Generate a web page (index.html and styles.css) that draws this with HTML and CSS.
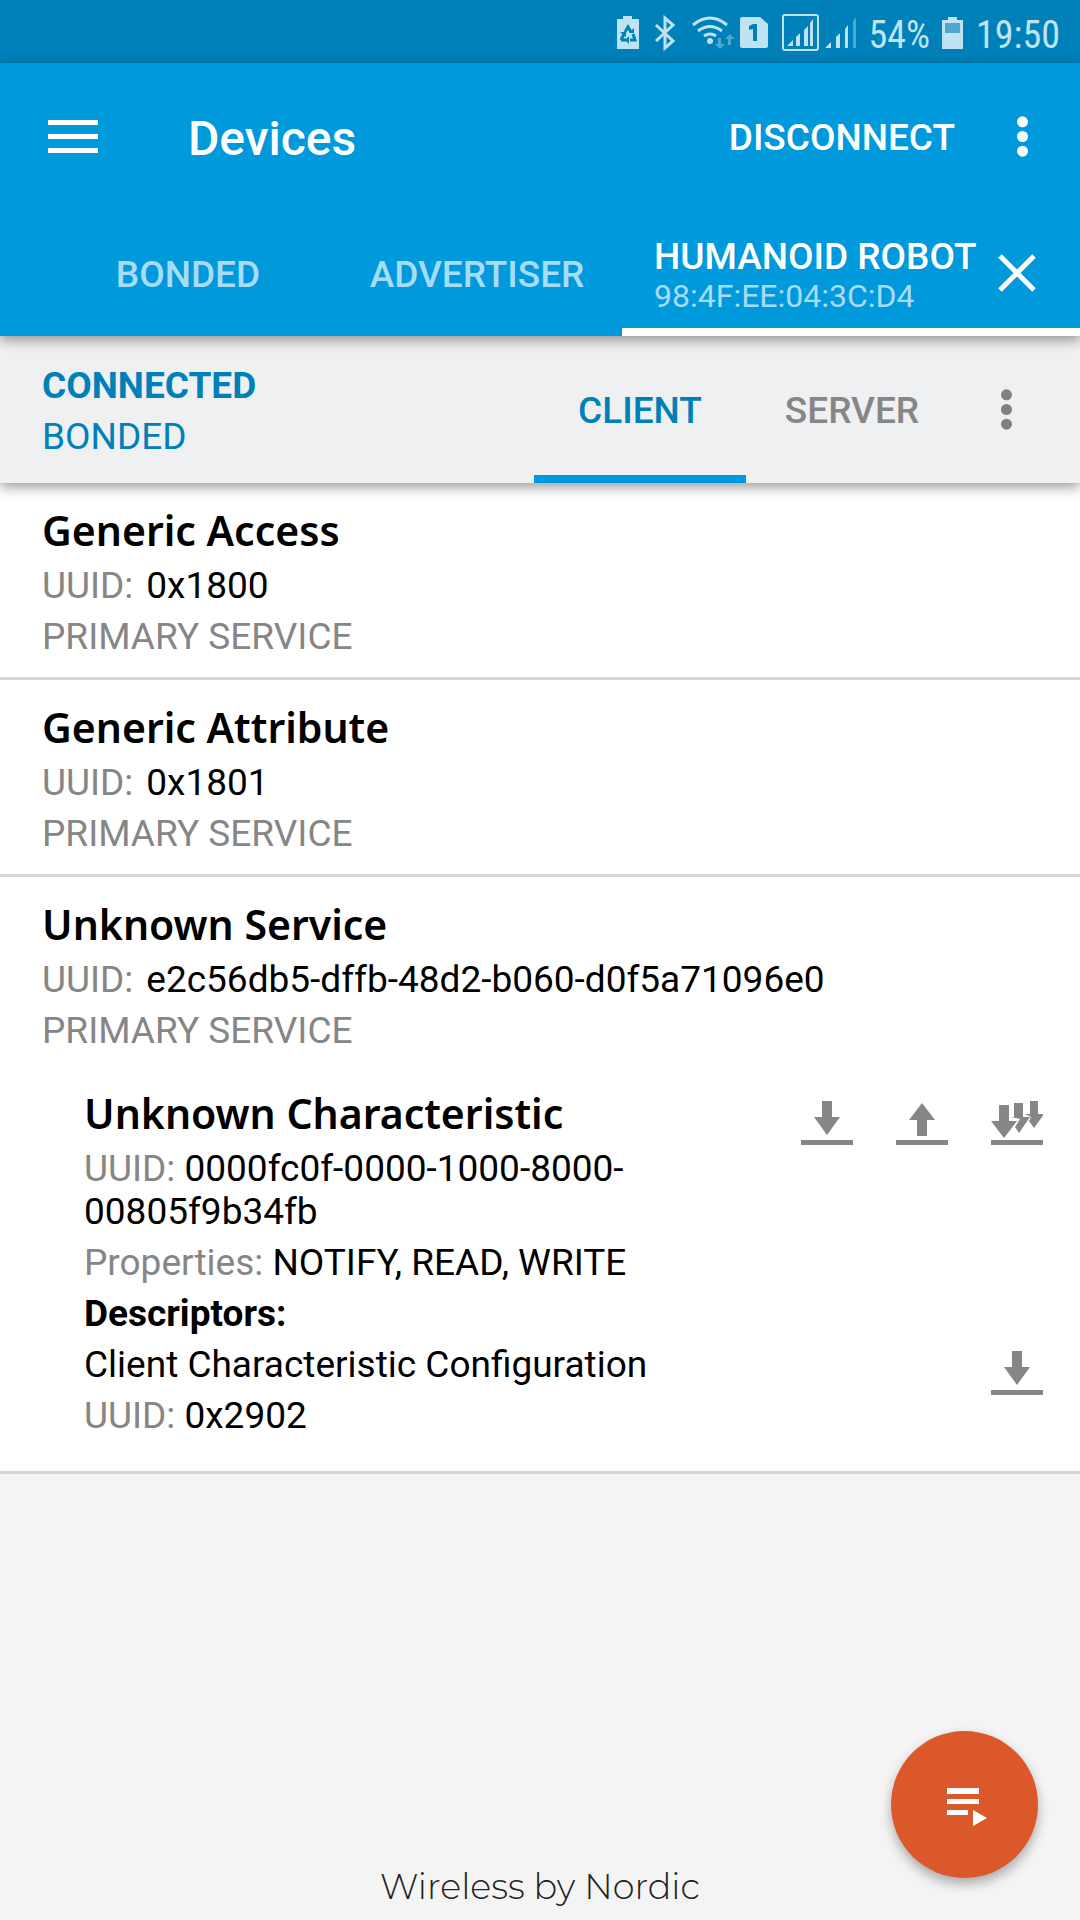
FILE: index.html
```html
<!DOCTYPE html>
<html lang="en">
<head>
<meta charset="utf-8">
<meta name="viewport" content="width=device-width, initial-scale=1">
<title>Devices</title>
<link rel="stylesheet" href="styles.css">
</head>
<body>
<svg class="defs" aria-hidden="true">
  <symbol id="read" viewBox="0 0 52 46"><path d="M21 1h10v16h8L26 35 13 17h8zM0 40h52v5H0z"/></symbol>
  <symbol id="write" viewBox="0 0 52 46"><path d="M21 36h10V20h8L26 3 13 20h8zM0 40h52v5H0z"/></symbol>
  <symbol id="notify" viewBox="0 0 52 46"><path d="M39 1h8v13h6L43 28l-5-7 2-4-6-3h5zM23 3h9v14h7L28 33l-4-6 5-8-9-2h3zM8 5h10v16h8L13 38 0 21h8zM0 40h52v5H0z"/></symbol>
  <symbol id="more" viewBox="0 0 12 44"><circle cx="6" cy="6" r="6"/><circle cx="6" cy="22" r="6"/><circle cx="6" cy="38" r="6"/></symbol>
</svg>

<div class="status">
  <svg class="st-recycle" width="22" height="34" viewBox="0 0 22 34"><path class="pale" d="M6 0h9v3h7v30H0V3h6z"/><path class="recycle" d="M8 16l3-5 3 5M16 18l2 6h-5M4 24l3-6M4 24h5"/><path class="dark" d="M12 20v8l-4-4zM3 16l6 0 0 5zM12 17l5 0 0-5z"/></svg>
  <svg class="st-bt" width="22" height="34" viewBox="0 0 22 34"><path class="stroke" d="M2 9l17 16-8 7V2l8 7L2 25"/></svg>
  <svg class="st-wifi" width="42" height="34" viewBox="0 0 42 34"><path class="stroke" d="M1 9q17-14 34 0M6 15q12-9 24 0M12 20q6-4 12 0"/><circle class="pale" cx="18" cy="25" r="3"/><path class="faint" d="M26 22h3v6h4l-5 5-5-5h3zM36 29h3v-6h4l-5-5-5 5h3z"/></svg>
  <svg class="st-sim" width="28" height="34" viewBox="0 0 28 34"><path class="pale" d="M2 1h18l8 7v22q0 2-2 2H2q-2 0-2-2V3q0-2 2-2z"/><path class="dark" d="M13 8h4v17h-4V13l-4 1v-4z"/></svg>
  <svg class="st-sig" width="37" height="38" viewBox="0 0 37 38"><rect class="stroke thin" x="1" y="1" width="35" height="35" rx="2"/><path class="pale" d="M5 32l6-6v6zM14 32V23l4-4v13zM22 32V16l4-4v20zM28 32V9l3-4v27z"/></svg>
  <svg class="st-sig2" width="32" height="34" viewBox="0 0 32 34"><path class="pale" d="M0 32l6-6v6zM11 32V21l4-4v15zM20 32V13l3-4v23z"/><path class="faint" d="M28 32V5l3-4v31z"/></svg>
  <span class="percent">54%</span>
  <svg class="st-bat" width="22" height="34" viewBox="0 0 22 34"><path class="pale" d="M6 1h9v3h6v29H0V4h6z"/><path class="faint" d="M3 7h15v10H3z"/></svg>
  <span class="clock">19:50</span>
</div>

<header class="top">
  <div class="toolbar">
    <button class="menu" aria-label="Open menu"><svg width="50" height="34" viewBox="0 0 50 34"><path d="M0 0h50v5H0zM0 14h50v5H0zM0 28h50v5H0z"/></svg></button>
    <h1>Devices</h1>
    <button class="disconnect">DISCONNECT</button>
    <button class="overflow" aria-label="More options"><svg width="11" height="43"><use href="#more"/></svg></button>
  </div>
  <nav class="tabs">
    <button class="tab">BONDED</button>
    <button class="tab">ADVERTISER</button>
    <div class="tab-device">
      <button class="device"><span class="name">HUMANOID ROBOT</span><span class="mac">98:4F:EE:04:3C:D4</span></button>
      <button class="close" aria-label="Close tab"><svg width="38" height="38" viewBox="0 0 38 38"><path d="M2 2l34 34M36 2L2 36"/></svg></button>
    </div>
  </nav>
</header>

<section class="connection">
  <div class="state"><strong>CONNECTED</strong><span>BONDED</span></div>
  <button class="subtab active">CLIENT</button>
  <button class="subtab">SERVER</button>
  <button class="suboverflow" aria-label="Connection options"><svg width="11" height="43"><use href="#more"/></svg></button>
</section>

<main>
  <article class="service">
    <h2>Generic Access</h2>
    <p><span class="key wide">UUID:</span>0x1800</p>
    <p class="key">PRIMARY SERVICE</p>
  </article>
  <article class="service">
    <h2>Generic Attribute</h2>
    <p><span class="key wide">UUID:</span>0x1801</p>
    <p class="key">PRIMARY SERVICE</p>
  </article>
  <article class="service">
    <h2>Unknown Service</h2>
    <p><span class="key wide">UUID:</span>e2c56db5-dffb-48d2-b060-d0f5a71096e0</p>
    <p class="key">PRIMARY SERVICE</p>
    <section class="characteristic">
      <div class="row">
        <div class="info">
          <h2>Unknown Characteristic</h2>
          <p><span class="key">UUID:</span> 0000fc0f-0000-1000-8000-00805f9b34fb</p>
          <p><span class="key">Properties:</span> NOTIFY, READ, WRITE</p>
          <p><strong>Descriptors:</strong></p>
        </div>
        <div class="actions">
          <button aria-label="Read"><svg width="52" height="46"><use href="#read"/></svg></button>
          <button aria-label="Write"><svg width="52" height="46"><use href="#write"/></svg></button>
          <button aria-label="Notify"><svg width="52" height="46"><use href="#notify"/></svg></button>
        </div>
      </div>
      <div class="row descriptor">
        <div class="info">
          <p>Client Characteristic Configuration</p>
          <p><span class="key">UUID:</span> 0x2902</p>
        </div>
        <div class="actions">
          <button aria-label="Read descriptor"><svg width="52" height="46"><use href="#read"/></svg></button>
        </div>
      </div>
    </section>
  </article>
</main>

<footer>Wireless by Nordic</footer>
<button class="fab" aria-label="Macros"><svg width="40" height="38" viewBox="0 0 40 38"><path d="M0 0h32v6H0zM0 11h32v5H0zM0 22h21v5H0zM26 22l14 8-14 8z"/></svg></button>
</body>
</html>
```
FILE: styles.css
```css
* { box-sizing: border-box; }

body {
  margin: 0;
  min-height: 100vh;
  display: flex;
  flex-direction: column;
  background: #f4f4f4;
  color: #000;
  font: 37px/43px Roboto, "Liberation Sans", sans-serif;
}

h1, h2, p { margin: 0; }
button {
  margin: 0;
  padding: 0;
  border: 0;
  background: none;
  color: inherit;
  font: inherit;
  cursor: pointer;
}
svg { display: block; fill: currentColor; overflow: visible; }
.defs { position: absolute; width: 0; height: 0; }

/* System status bar */
.status {
  height: 63px;
  padding: 2px 20px 0 0;
  display: flex;
  justify-content: flex-end;
  align-items: center;
  background: #0080b9;
  color: #bfe3f2;
  font-family: "Roboto Condensed", Roboto, sans-serif;
  font-size: 38px;
}
.st-bt { margin-left: 15px; }
.st-wifi { margin-left: 16px; }
.st-sim { margin-left: 6px; }
.st-sig { margin-left: 14px; }
.st-sig2 { margin-left: 6px; }
.percent { margin-left: 12px; }
.percent, .clock { padding-top: 5px; }
.st-bat { margin: 0 12px; }
.pale { fill: #bfe3f2; }
.dark { fill: #0080b9; }
.faint { fill: #4aa8d2; }
.stroke { fill: none; stroke: #bfe3f2; stroke-width: 3; }
.thin { stroke-width: 2; }
.recycle { fill: none; stroke: #0080b9; stroke-width: 3; }

/* App bar */
.top {
  position: relative;
  z-index: 2;
  background: #0099dc;
  color: #fff;
  box-shadow: 0 4px 12px rgba(0, 0, 0, .4);
}
.toolbar { height: 147px; padding: 0 52px 0 48px; display: flex; align-items: center; }
h1 { flex: 1; padding: 4px 0 0 90px; font-size: 48px; line-height: 56px; font-weight: 500; }
.disconnect { margin-right: 62px; padding-top: 2px; font-weight: 500; }
.tabs {
  height: 126px;
  padding-left: 44px;
  display: grid;
  grid-template-columns: 288fr 290fr 458fr;
  font-weight: 500;
}
.tab { padding-top: 2px; color: #a6dcf5; }
.tab-device {
  display: flex;
  align-items: center;
  justify-content: space-between;
  padding: 8px 44px 0 32px;
  border-bottom: 8px solid #fff;
}
.device { padding-top: 2px; text-align: left; }
.device span { display: block; }
.mac { color: #a6dcf5; font-size: 32px; line-height: 36px; font-weight: 400; }
.close svg { fill: none; stroke: currentColor; stroke-width: 5; }

/* Connection state */
.connection {
  position: relative;
  z-index: 1;
  height: 147px;
  padding: 0 26px 0 42px;
  display: flex;
  background: #eef0f2;
  color: #0080b9;
  box-shadow: 0 4px 12px rgba(0, 0, 0, .4);
}
.state { flex: 1; padding-top: 28px; display: flex; flex-direction: column; gap: 8px; }
.subtab { width: 212px; padding-top: 2px; font-weight: 500; color: #868686; border: solid transparent; border-width: 8px 0; }
.subtab.active { color: #0080b9; border-bottom-color: #0099dc; }
.suboverflow { width: 96px; display: grid; place-items: center; color: #808080; }

/* Attribute list */
main { background: #fff; }
.service { padding: 21px 0 19px 42px; border-bottom: 3px solid #d6d6d6; }
h2 { font: 600 41px/52px "Trebuchet MS", "Noto Sans", "Open Sans", sans-serif; }
h2 + p, p + p { margin-top: 8px; }
.key { color: #868686; }
.wide { margin-right: 13px; }
.characteristic { padding: 35px 0 15px 42px; }
.row { display: flex; padding-right: 37px; }
.row + .row { margin-top: 8px; }
.info { flex: 1; }
.actions { display: flex; gap: 43px; align-self: flex-start; padding: 13px 0 0 88px; color: #868686; }
.descriptor .actions { padding-top: 7px; }

footer {
  margin-top: auto;
  padding-bottom: 12px;
  text-align: center;
  color: #222;
  font: 300 35px/43px Montserrat, Inter, sans-serif;
}
.fab {
  position: fixed;
  right: 42px;
  bottom: 42px;
  width: 147px;
  height: 147px;
  padding: 4px 0 0 4px;
  display: grid;
  place-items: center;
  border-radius: 50%;
  background: #db582a;
  color: #fff;
  box-shadow: 0 6px 12px rgba(0, 0, 0, .3);
}
```
